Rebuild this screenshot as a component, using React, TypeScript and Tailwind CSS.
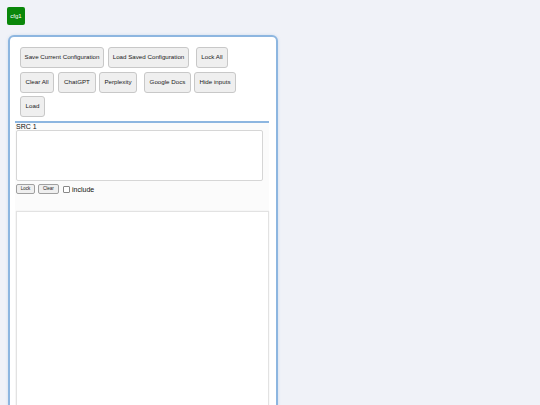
import React from "react";

const font = { fontFamily: '"Liberation Sans", Arial, sans-serif' };

function Btn({ w, children, className = "" }: { w: string; children: React.ReactNode; className?: string }) {
  return (
    <button
      className={`h-[21px] ${w} shrink-0 rounded-[3px] border border-[#c8c8c8] bg-[#efefef] text-[6.2px] text-[#1a1a1a] leading-none flex items-center justify-center whitespace-nowrap ${className}`}
    >
      {children}
    </button>
  );
}

export default function App() {
  return (
    <div className="min-h-screen w-full bg-[#f0f2f8] pl-[7px] pt-[7px] overflow-hidden" style={font}>
      <button className="w-[18px] h-[18px] rounded-[2px] bg-[#0a870a] text-white text-[6px] leading-none flex items-center justify-center">
        cfg1
      </button>
      <div className="mt-[10px] ml-[1px] w-[270px] h-[420px] rounded-[6px] border-2 border-[#8db6e0] bg-white pt-[10px] pl-[10px] shadow-[0_0_3px_rgba(140,180,220,0.35)]">
        <div className="flex flex-col gap-[3px]">
          <div className="flex">
            <Btn w="w-[84px]">Save Current Configuration</Btn>
            <Btn w="w-[81px]" className="ml-[4px]">Load Saved Configuration</Btn>
            <Btn w="w-[32px]" className="ml-[7px]">Lock All</Btn>
          </div>
          <div className="flex mt-[1px]">
            <Btn w="w-[34px]">Clear All</Btn>
            <Btn w="w-[38px]" className="ml-[4px]">ChatGPT</Btn>
            <Btn w="w-[38px]" className="ml-[3px]">Perplexity</Btn>
            <Btn w="w-[47px]" className="ml-[7px]">Google Docs</Btn>
            <Btn w="w-[42px]" className="ml-[3px]">Hide inputs</Btn>
          </div>
          <div className="flex">
            <Btn w="w-[25px]">Load</Btn>
          </div>
        </div>
        <div className="mt-[4px] -ml-[5px] w-[254px] h-[300px] border-t-2 border-[#8db6e0] bg-[#fbfbfb] pl-[1px]">
          <div className="text-[7px] leading-[7px] text-[#111]">SRC 1</div>
          <div className="w-[247px] h-[51px] rounded-[2px] border border-[#d6d6d6] bg-white" />
          <div className="flex items-center mt-[3px] h-[10px]">
            <button className="h-[10px] w-[19px] rounded-[2px] border border-[#a0a0a0] bg-[#efefef] text-[4.5px] text-[#222] leading-none flex items-center justify-center">
              Lock
            </button>
            <button className="ml-[3px] h-[10px] w-[21px] rounded-[2px] border border-[#a0a0a0] bg-[#efefef] text-[4.5px] text-[#222] leading-none flex items-center justify-center">
              Clear
            </button>
            <span className="ml-[4px] w-[7px] h-[7px] border border-[#888] rounded-[1px] bg-white" />
            <span className="ml-[2px] text-[7px] text-[#111] leading-none">include</span>
          </div>
          <div className="mt-[17px] w-[253px] h-[260px] border border-[#e2e2e2] bg-white shadow-[0_0_1px_rgba(0,0,0,0.12)]" />
        </div>
      </div>
    </div>
  );
}
